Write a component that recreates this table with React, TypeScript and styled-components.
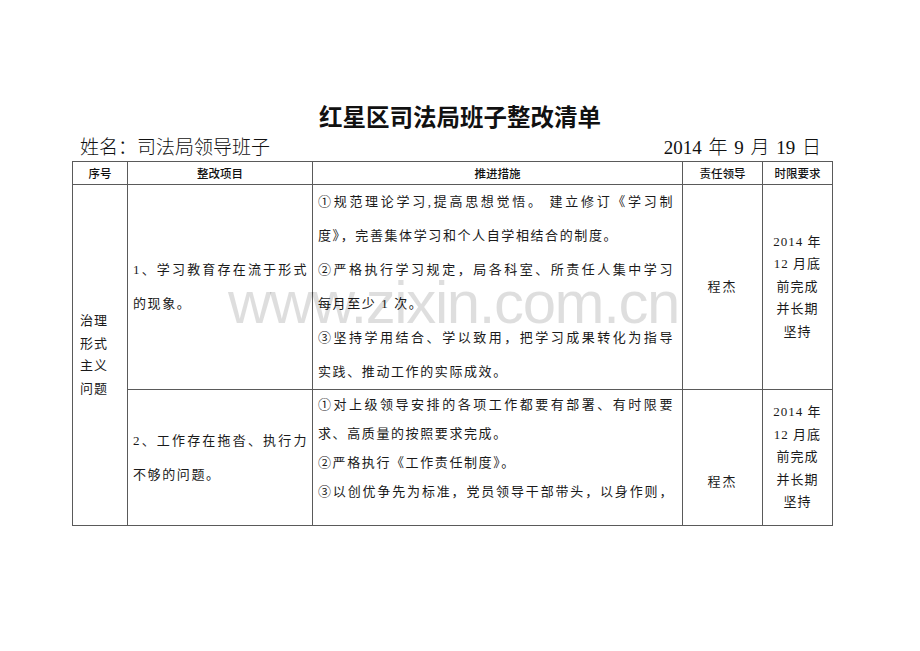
import React from "react";
import styled, { createGlobalStyle } from "styled-components";

const Global = createGlobalStyle`
  html, body { margin: 0; padding: 0; background: #fff; }
  body { font-family: "Liberation Serif", "Noto Sans CJK SC", serif; color: #1a1a1a; }
`;

const Page = styled.div`
  position: relative;
  width: 920px;
  height: 651px;
  padding: 101px 0 0 72px;
  box-sizing: border-box;
  overflow: hidden;
`;

const Sheet = styled.div`
  width: 760px;
  display: flex;
  flex-direction: column;
`;

const Title = styled.h1`
  margin: 0;
  height: 30px;
  line-height: 30px;
  text-align: center;
  font-family: "Noto Sans CJK SC", sans-serif;
  font-size: 23.5px;
  font-weight: 700;
  color: #111;
  padding-left: 16px;
  letter-spacing: 0;
`;

const InfoRow = styled.div`
  margin-top: 4px;
  height: 26px;
  line-height: 26px;
  display: flex;
  justify-content: space-between;
  align-items: center;
  padding: 0 11px 0 8px;
  font-size: 19px;
  font-family: "Liberation Serif", "Noto Sans CJK SC", serif;
  font-weight: 300;
  color: #111;
`;

const DateText = styled.span`
  word-spacing: 2px;
`;

const Table = styled.table`
  width: 760px;
  border-collapse: collapse;
  table-layout: fixed;
`;

const HeadCell = styled.th`
  height: 22px;
  padding: 0;
  border: 1px solid #5a5a5a;
  font-family: "Noto Sans CJK SC", sans-serif;
  font-size: 11.5px;
  font-weight: 500;
  color: #111;
  text-align: center;
  vertical-align: middle;
  line-height: 20px;
`;

const Cell = styled.td<{ $align?: string; $valign?: string; $pad?: string }>`
  border: 1px solid #5a5a5a;
  padding: ${(p) => p.$pad ?? "0"};
  text-align: ${(p) => p.$align ?? "left"};
  vertical-align: ${(p) => p.$valign ?? "middle"};
  font-size: 13px;
  color: #1a1a1a;
`;

const Lines = styled.div<{ $lh: number; $spacing?: number }>`
  line-height: ${(p) => p.$lh}px;
  letter-spacing: ${(p) => p.$spacing ?? 1.6}px;
`;

const Line = styled.div<{ $full?: boolean }>`
  white-space: nowrap;
  text-align: ${(p) => (p.$full ? "justify" : "inherit")};
  text-align-last: ${(p) => (p.$full ? "justify" : "auto")};
`;

const Vertical = styled.div`
  width: 30px;
  line-height: 22.5px;
  letter-spacing: 1px;
`;

const Watermark = styled.div`
  position: absolute;
  left: 228px;
  top: 273px;
  font-family: "Liberation Sans", Arial, sans-serif;
  font-size: 60px;
  line-height: 60px;
  letter-spacing: -1.4px;
  color: rgba(0, 0, 0, 0.13);
  pointer-events: none;
  white-space: nowrap;
`;

type Row = {
  issue: string[];
  measures: { text: string; full?: boolean }[];
  lh: number;
  height: number;
  leaderPad?: string;
};

const rows: Row[] = [
  {
    issue: ["1、学习教育存在流于形式", "的现象。"],
    measures: [
      { text: "①规范理论学习,提高思想觉悟。 建立修订《学习制", full: true },
      { text: "度》，完善集体学习和个人自学相结合的制度。" },
      { text: "②严格执行学习规定，局各科室、所责任人集中学习", full: true },
      { text: "每月至少 1 次。" },
      { text: "③坚持学用结合、学以致用，把学习成果转化为指导", full: true },
      { text: "实践、推动工作的实际成效。" },
    ],
    lh: 34,
    height: 204,
  },
  {
    issue: ["2、工作存在拖沓、执行力", "不够的问题。"],
    measures: [
      { text: "①对上级领导安排的各项工作都要有部署、有时限要", full: true },
      { text: "求、高质量的按照要求完成。" },
      { text: "②严格执行《工作责任制度》。" },
      { text: "③以创优争先为标准，党员领导干部带头，以身作则，", full: true },
    ],
    lh: 29,
    height: 136,
    leaderPad: "48px 0 0 0",
  },
];

const deadline = ["2014 年", "12 月底", "前完成", "并长期", "坚持"];

export default function App() {
  return (
    <Page>
      <Global />
      <Sheet>
        <Title>红星区司法局班子整改清单</Title>
        <InfoRow>
          <span>姓名：司法局领导班子</span>
          <DateText>2014 年 9 月 19 日</DateText>
        </InfoRow>
        <Table>
          <colgroup>
            <col style={{ width: 55 }} />
            <col style={{ width: 185 }} />
            <col style={{ width: 370 }} />
            <col style={{ width: 80 }} />
            <col style={{ width: 70 }} />
          </colgroup>
          <thead>
            <tr>
              <HeadCell>序号</HeadCell>
              <HeadCell>整改项目</HeadCell>
              <HeadCell>推进措施</HeadCell>
              <HeadCell>责任领导</HeadCell>
              <HeadCell>时限要求</HeadCell>
            </tr>
          </thead>
          <tbody>
            {rows.map((r, i) => (
              <tr key={i} style={{ height: r.height }}>
                {i === 0 && (
                  <Cell rowSpan={rows.length} $pad="0 0 0 7px">
                    <Vertical>治理形式主义问题</Vertical>
                  </Cell>
                )}
                <Cell $pad="0 4px 0 5px">
                  <Lines $lh={34}>
                    {r.issue.map((t, j) => (
                      <Line key={j} $full={j === 0}>
                        {t}
                      </Line>
                    ))}
                  </Lines>
                </Cell>
                <Cell $valign="top" $pad="0 8px 0 5px">
                  <Lines $lh={r.lh}>
                    {r.measures.map((m, j) => (
                      <Line key={j} $full={m.full}>
                        {m.text}
                      </Line>
                    ))}
                  </Lines>
                </Cell>
                <Cell $align="center" $pad={r.leaderPad}>
                  <Lines $lh={22} $spacing={2}>
                    程杰
                  </Lines>
                </Cell>
                <Cell $align="center">
                  <Lines $lh={22.5} $spacing={1}>
                    {deadline.map((t, j) => (
                      <Line key={j}>{t}</Line>
                    ))}
                  </Lines>
                </Cell>
              </tr>
            ))}
          </tbody>
        </Table>
      </Sheet>
      <Watermark>www.zixin.com.cn</Watermark>
    </Page>
  );
}
